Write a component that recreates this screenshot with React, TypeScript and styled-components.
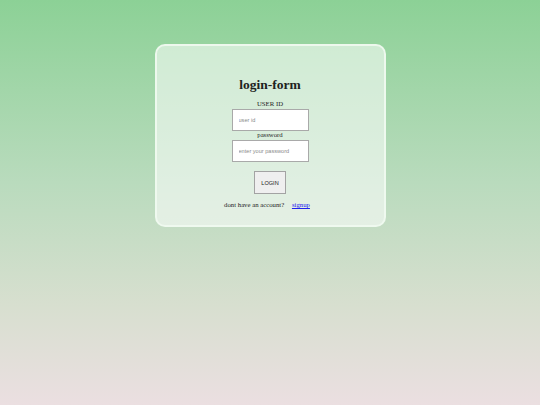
import React from "react";
import styled, { createGlobalStyle } from "styled-components";

const Global = createGlobalStyle`
  html, body { margin: 0; padding: 0; }
  body {
    width: 540px;
    height: 405px;
    overflow: hidden;
    background: linear-gradient(to bottom, #8cd196 0%, #b9dbbd 45%, #d7dfcf 75%, #ebdfe1 100%);
    font-family: "Liberation Serif", "Times New Roman", serif;
  }
`;

const Page = styled.div`
  width: 540px;
  height: 405px;
  display: flex;
  justify-content: center;
  align-items: flex-start;
  padding-top: 44px;
  box-sizing: border-box;
`;

const Card = styled.form`
  width: 231px;
  height: 183px;
  box-sizing: border-box;
  border: 2px solid rgba(240, 250, 240, 0.9);
  border-radius: 10px;
  background: rgba(255, 255, 255, 0.55);
  display: flex;
  flex-direction: column;
  align-items: center;
  padding-top: 31px;
`;

const Title = styled.h2`
  margin: 0;
  font-size: 13.5px;
  line-height: 16px;
  font-weight: bold;
  color: #1e231e;
`;

const Label = styled.label<{ $top: number }>`
  display: block;
  margin-top: ${(p) => p.$top}px;
  font-size: 6.75px;
  line-height: 8px;
  color: #1e231e;
`;

const Input = styled.input`
  width: 77px;
  height: 22px;
  box-sizing: border-box;
  margin-top: 1px;
  border: 1px solid #a9a9a9;
  background: #ffffff;
  padding: 0 0 0 6px;
  font-family: "Liberation Sans", Arial, sans-serif;
  font-size: 5.6px;
  outline: none;
  &::placeholder {
    color: #8a8a8a;
  }
`;

const Button = styled.button`
  margin-top: 9px;
  width: 32px;
  height: 23px;
  box-sizing: border-box;
  border: 1px solid #a3a3a3;
  background: #efefef;
  padding: 0;
  font-family: "Liberation Sans", Arial, sans-serif;
  font-size: 5.6px;
  color: #1a1a1a;
`;

const Footer = styled.p`
  margin: 7px 0 0 -6px;
  font-size: 6.75px;
  line-height: 8px;
  color: #1e231e;
  white-space: nowrap;
`;

const Link = styled.a`
  margin-left: 6px;
  color: #2020ee;
  text-decoration: underline;
`;

export default function App() {
  return (
    <>
      <Global />
      <Page>
        <Card onSubmit={(e) => e.preventDefault()}>
          <Title>login-form</Title>
          <Label $top={7} htmlFor="uid">USER ID</Label>
          <Input id="uid" placeholder="user id" />
          <Label $top={0} htmlFor="pw">password</Label>
          <Input id="pw" type="password" placeholder="enter your password" />
          <Button type="submit">LOGIN</Button>
          <Footer>
            dont have an account? <Link href="#">signup</Link>
          </Footer>
        </Card>
      </Page>
    </>
  );
}
